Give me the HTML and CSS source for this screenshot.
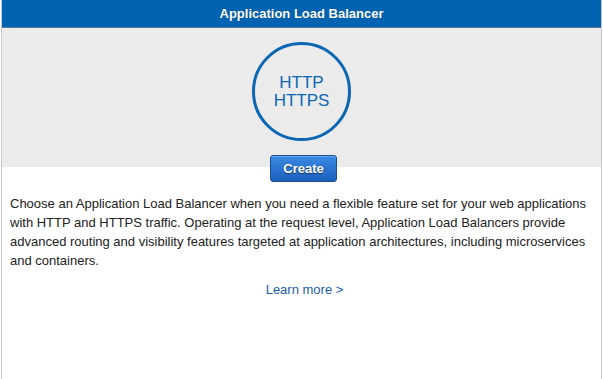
FILE: index.html
```html
<!DOCTYPE html>
<html>
<head>
<meta charset="utf-8">
<link rel="stylesheet" href="styles.css">
</head>
<body>
<div class="card">
  <div class="card-header">Application Load Balancer</div>
  <div class="hero">
    <div class="circle"><span>HTTP<br>HTTPS</span></div>
  </div>
  <div class="actions">
    <button class="btn-create">Create</button>
  </div>
  <p class="desc">Choose an Application Load Balancer when you need a flexible feature set for your web applications with HTTP and HTTPS traffic. Operating at the request level, Application Load Balancers provide advanced routing and visibility features targeted at application architectures, including microservices and containers.</p>
  <div class="learn"><a href="#">Learn more &gt;</a></div>
</div>
</body>
</html>
```
FILE: styles.css
```css
html, body {
  margin: 0;
  padding: 0;
  background: #fff;
}
body {
  font-family: "Liberation Sans", Arial, Helvetica, sans-serif;
  font-size: 13px;
  color: #222;
}
.card {
  margin-left: 1px;
  width: 601px;
  height: 379px;
  box-sizing: border-box;
  border-left: 1px solid #c6c6c6;
  border-right: 1px solid #c6c6c6;
}
.card-header {
  height: 27px;
  line-height: 27px;
  background: #0063b1;
  border-bottom: 1px solid #5a7894;
  color: #fff;
  font-weight: bold;
  font-size: 13px;
  text-align: center;
  text-shadow: 0 0 1px rgba(0,0,0,0.35);
}
.hero {
  background: #ebebeb;
  padding: 14px 0 26px;
  display: flex;
  justify-content: center;
}
.circle {
  width: 99px;
  height: 99px;
  box-sizing: border-box;
  border: 3px solid #0b66b3;
  border-radius: 50%;
  display: flex;
  align-items: center;
  justify-content: center;
  text-align: center;
  color: #0b66b3;
  font-size: 17px;
  line-height: 18px;
}
.actions {
  margin-top: -12px;
  padding-left: 4px;
  display: flex;
  justify-content: center;
}
.btn-create {
  width: 67px;
  height: 27px;
  padding: 0;
  border: 1px solid #1a4e8e;
  border-radius: 3px;
  background: linear-gradient(#3a8ae4, #1b5fbd);
  box-shadow: inset 0 1px 0 rgba(255,255,255,0.25);
  color: #fff;
  font-family: "Liberation Sans", Arial, Helvetica, sans-serif;
  font-weight: bold;
  font-size: 13px;
  text-shadow: 0 1px 1px rgba(0,0,0,0.6);
  cursor: pointer;
}
.desc {
  margin: 12px 0 0;
  padding: 0 8px;
  line-height: 19px;
  color: #222;
}
.learn {
  margin-top: 10px;
  padding-left: 6px;
  text-align: center;
  line-height: 19px;
}
.learn a {
  color: #1a5ea8;
  text-decoration: none;
}
```
